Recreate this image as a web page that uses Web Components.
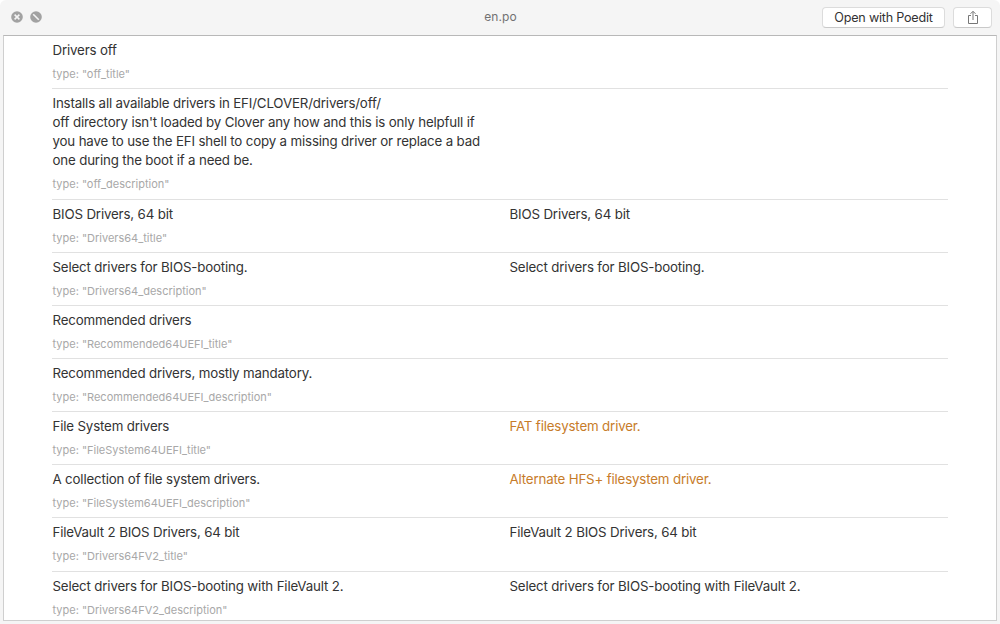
<!DOCTYPE html>
<html lang="en"><head><meta charset="utf-8"><title>en.po</title>
<style>
html,body{margin:0;height:100%;overflow:hidden}
body{background:#fff;font-family:Inter,"Liberation Sans",sans-serif}
</style></head><body>
<preview-window></preview-window>
<script>
class TitleBar extends HTMLElement{
  constructor(){super();this.attachShadow({mode:'open'}).innerHTML=`<style>
:host{display:grid;grid-template-columns:1fr auto 1fr;align-items:center;height:35px;padding:0 5px 0 8px;box-sizing:border-box;flex:none}
.controls{display:flex;gap:7px;margin-top:-1px}
svg{display:block}
.title{font-size:12px;line-height:16px;color:#727272;letter-spacing:.05px;margin:-1px 2px 0 0}
.actions{display:flex;gap:8px;justify-content:flex-end}
</style>
<div class="controls">
<svg width="12" height="12" viewBox="0 0 12 12"><circle cx="6" cy="6" r="5.8" fill="#a2a2a2"/><path d="M3.6 3.6l4.8 4.8M8.4 3.6L3.6 8.4" stroke="#f5f5f5" stroke-width="1.5"/></svg>
<svg width="12" height="12" viewBox="0 0 12 12"><circle cx="6" cy="6" r="5.8" fill="#a2a2a2"/><path d="M3.2 3.2l5.6 5.6" stroke="#f5f5f5" stroke-width="1.6"/></svg>
</div><div class="title"><slot></slot></div><div class="actions"><slot name="actions"></slot></div>`}
}
customElements.define('title-bar',TitleBar);

class ToolButton extends HTMLElement{
  constructor(){super();this.attachShadow({mode:'open'}).innerHTML=`<style>
:host{display:block}
button{all:unset;box-sizing:border-box;display:flex;align-items:center;justify-content:center;width:100%;height:21px;border:1px solid #dcdcdc;border-bottom-color:#c9c9c9;border-radius:4px;background:#fff;color:#333;font-size:12.6px;line-height:19px;white-space:nowrap;letter-spacing:-.22px}
</style><button><slot></slot></button>`}
}
customElements.define('tool-button',ToolButton);

class PoEntry extends HTMLElement{
  constructor(){super();this.attachShadow({mode:'open'}).innerHTML=`<style>
:host{display:grid;grid-template-columns:457px 1fr;height:53.17px;box-sizing:border-box;border-bottom:1px solid #e1e1e1;padding:5px 0 0 .5px;font-size:13.3px;line-height:19px;color:#333;white-space:nowrap}
:host([tall]){height:110.35px}
:host([fuzzy]) .translation{color:#c77c2a}
:host(:last-child){border-bottom:0}
.type{font-size:11px;line-height:17px;color:#a8a8a8;margin-top:6px}
.source,.translation{letter-spacing:-.16px}
::slotted(*){display:block;white-space:pre-line}
</style><div><div class="source"><slot></slot></div><div class="type"><slot name="type"></slot></div></div><div class="translation"><slot name="translation"></slot></div>`}
}
customElements.define('po-entry',PoEntry);

class PreviewWindow extends HTMLElement{
  constructor(){super();this.attachShadow({mode:'open'}).innerHTML=`<style>
:host{display:flex;flex-direction:column;height:624px;width:1000px;box-sizing:border-box;background:#f5f5f5;padding:0 3px 3px;border-radius:6px 6px 0 0}
.page{flex:1;min-height:0;overflow:hidden;background:#fff;border:1px solid #cfcfcf;border-top-color:#b8b8b8;padding:.05px 48px 0;box-sizing:border-box}
.share{width:39px}.open{width:123px}
svg{display:block}
</style>
<title-bar>en.po<tool-button slot="actions" class="open">Open with Poedit</tool-button><tool-button slot="actions" class="share"><svg width="12" height="15" viewBox="0 0 12 15" fill="none" stroke="#777"><path d="M4 5.5H1.5v8h9v-8H8M6 10V1.5M3.5 3.8L6 1.3l2.5 2.5"/></svg></tool-button></title-bar>
<div class="page"><div class="list"></div></div>`;
  const rows=[
  ['Drivers off','off_title'],
  ["Installs all available drivers in EFI/CLOVER/drivers/off/\noff directory isn't loaded by Clover any how and this is only helpfull if\nyou have to use the EFI shell to copy a missing driver or replace a bad\none during the boot if a need be.",'off_description','','tall'],
  ['BIOS Drivers, 64 bit','Drivers64_title','BIOS Drivers, 64 bit'],
  ['Select drivers for BIOS-booting.','Drivers64_description','Select drivers for BIOS-booting.'],
  ['Recommended drivers','Recommended64UEFI_title'],
  ['Recommended drivers, mostly mandatory.','Recommended64UEFI_description'],
  ['File System drivers','FileSystem64UEFI_title','FAT filesystem driver.','fuzzy'],
  ['A collection of file system drivers.','FileSystem64UEFI_description','Alternate HFS+ filesystem driver.','fuzzy'],
  ['FileVault 2 BIOS Drivers, 64 bit','Drivers64FV2_title','FileVault 2 BIOS Drivers, 64 bit'],
  ['Select drivers for BIOS-booting with FileVault 2.','Drivers64FV2_description','Select drivers for BIOS-booting with FileVault 2.']];
  const list=this.shadowRoot.querySelector('.list');
  for(const [source,type,translation,flag] of rows){
    const e=document.createElement('po-entry');
    if(flag)e.setAttribute(flag,'');
    const add=(text,slot)=>{if(!text)return;const s=document.createElement('span');s.textContent=text;if(slot)s.slot=slot;e.append(s)};
    add(source);add('type: "'+type+'"','type');add(translation,'translation');
    list.append(e);
  }}
}
customElements.define('preview-window',PreviewWindow);
</script></body></html>
